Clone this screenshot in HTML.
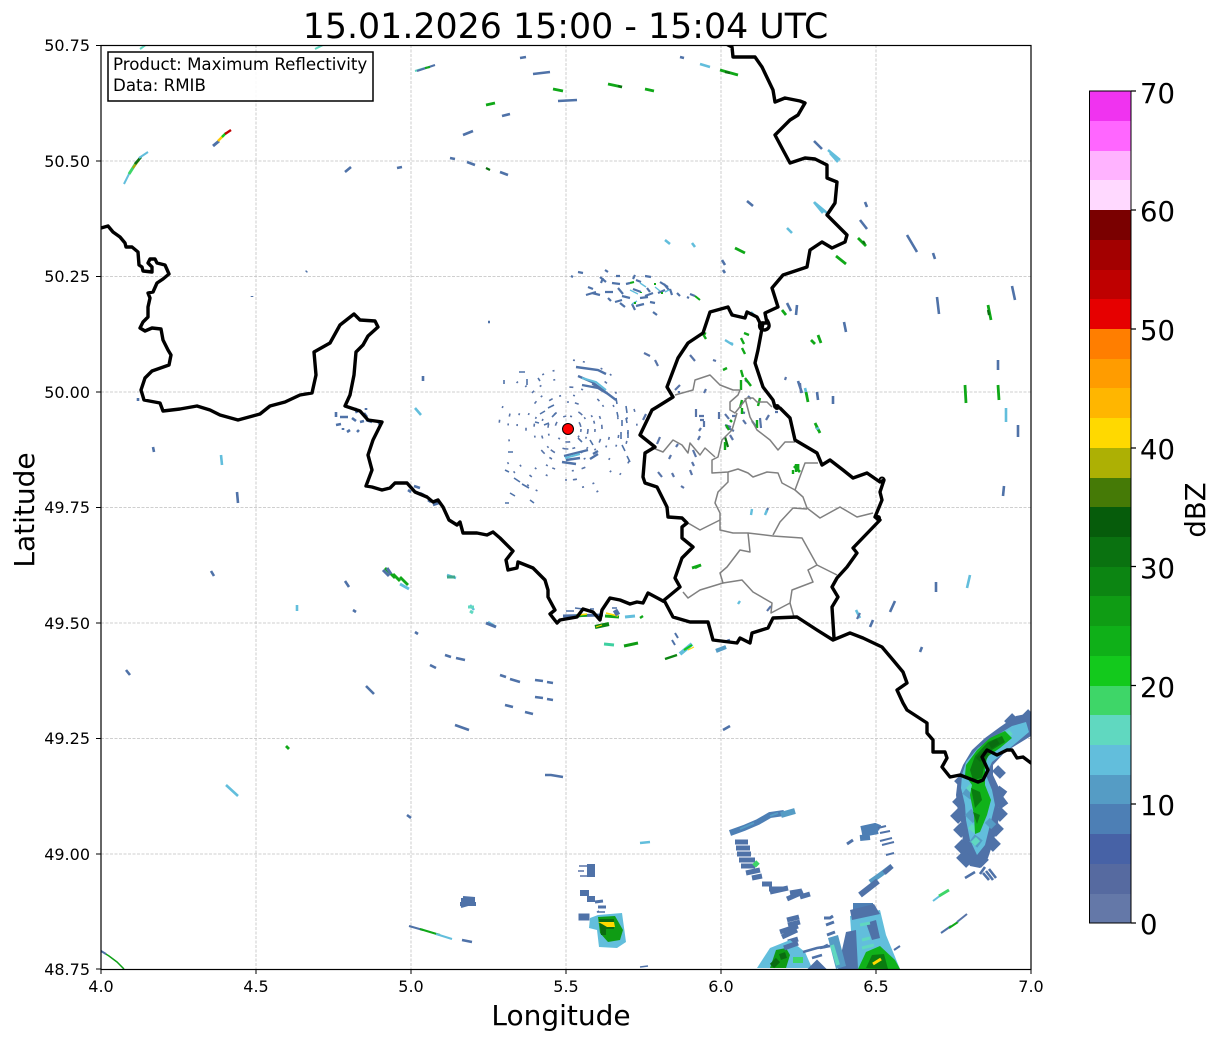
<!DOCTYPE html>
<html><head><meta charset="utf-8"><style>html,body{margin:0;padding:0;background:#fff}svg{display:block}text{font-family:"DejaVu Sans","Liberation Sans",sans-serif;fill:#000}</style></head><body>
<svg width="1219" height="1040" viewBox="0 0 1219 1040" xmlns="http://www.w3.org/2000/svg">
<defs><clipPath id="a"><rect x="101" y="45.5" width="930" height="924"/></clipPath></defs>
<rect width="1219" height="1040" fill="#fff"/>
<text x="565.5" y="38" font-size="34.8" text-anchor="middle">15.01.2026 15:00 - 15:04 UTC</text>
<g stroke="#c0c0c0" stroke-width=".8" stroke-dasharray="3 1.5" fill="none"><path d="M256 45V969M411 45V969M566 45V969M721 45V969M876 45V969M101 161H1031M101 276.5H1031M101 392H1031M101 507.5H1031M101 623H1031M101 738.5H1031M101 854H1031"/></g>
<g clip-path="url(#a)" fill="none" stroke-linecap="butt">
<!-- speckle rings around radar -->
<g stroke="#5874a8" stroke-width="1.6">
<circle cx="568" cy="429" r="13" stroke-dasharray="3 4 2 9 5 6 2 13 4 8"/>
<circle cx="568" cy="429" r="20" stroke-dasharray="5 3 2 14 3 4 6 19 2 6 4 11 3 23"/>
<circle cx="568" cy="429" r="27" stroke-dasharray="2 6 4 17 2 4 3 27 5 3 2 9 3 15 2 31" stroke-dashoffset="9"/>
<circle cx="568" cy="429" r="34" stroke-dasharray="3 5 2 21 4 7 2 12 2 33 3 6 5 14 2 9" stroke-dashoffset="21"/>
<circle cx="568" cy="429" r="42" stroke-dasharray="2 11 3 6 2 29 4 8 2 17 3 5 2 41 3 13" stroke-dashoffset="5"/>
<circle cx="568" cy="429" r="51" stroke-dasharray="2 9 2 24 3 7 2 13 2 38 4 6 2 18 2 11 2 47" stroke-dashoffset="31"/>
<circle cx="568" cy="429" r="60" stroke-dasharray="2 14 2 7 3 31 2 19 2 9 2 53 3 12 2 26" stroke-dashoffset="13"/>
<circle cx="568" cy="429" r="69" stroke-dasharray="2 17 2 9 2 41 3 12 2 27 2 61 2 8" stroke-dashoffset="40"/></g>
<g stroke="#4f72a8" stroke-width="1.6"><path d="M616 398l1 6M617 412l1 5M622 420v6M621 432v7M626 406l1 7M626 418l1 5M628 430v8M622 445l3 6M627 456l3 6M508 452h5M505 470l4 2M514 478l6 4M522 484l7 4M510 493l5 3M530 500l4 3M505 503h4M519 372h6M527 379v6M504 380v4M540 414l5-3M548 408l6-3M552 417l4-4M535 422l4 1M544 425l5-2M578 438l4 4M590 440l3 5M538 378l2 3"/></g>
<!-- arcs above radar -->
<g stroke="#4f72a8" stroke-width="2.4"><path d="M576 367l22 3l8 4M578 376l14 6l16 12l8 6M582 385l16 3l10 6M566 460l14-2M564 456l24-6M562 462l14 2M590 459l8-5M593 454l5-3"/></g>
<g stroke="#62bedc" stroke-width="2"><path d="M582 378l14 4l10 8M565 458l15-4"/></g>
<!-- cluster north of radar -->
<g stroke="#4f72a8" stroke-width="2.2"><path d="M586 295l10-3M588 287l5 2M592 293l8 2M600 277l6 5M603 278l-2 5M605 292h8M612 283l8 1M618 288l5 6M622 296l8 2M615 302l7-2M633 289l8 3M636 280l5 2M645 296l8-3M658 293l7-3M660 282l8 5M664 284l5 6M670 289l2 6M677 293l3 3M690 294l5 2M687 297l2 1M650 302l5 1M636 306l8-2M653 312l4 3M616 276h4M633 279l2-4"/><path d="M640 298l8-1M620 303l5 4M605 270l3 2M645 276l6 1M632 304l3 6M608 298l3 3M626 284l4-1M647 288l3 4M578 272l5 1M571 276l2 1"/></g>
<g stroke="#62bedc" stroke-width="1.4"><path d="M630 290l8 4M640 283l6 4M655 287l5 4M632 304l5-3M665 292l4-2"/></g>
<g stroke="#10a818" stroke-width="2"><path d="M695 296l5 4M630 283l4-1M641 292v1M655 283v2M662 292v2M634 303h2"/></g>
<!-- Dashes: blue -->
<g stroke="#4f72a8" stroke-width="2.6"><path d="M463 135l10-4M520 58l6-1M533 74l17-2M558 101l19-1M502 116l8-2M467 162l8 3M450 158l5 1M345 172l6-5M397 168l5-1M500 172l8 3M680 57l4 1M814 141l8 8M747 201l6 5M865 202l2 5M860 220l7 9M907 235l10 17M933 253l2 6M722 260l3 5M723 270l2 3M787 303l4 8M797 305l-1 10M844 322l2 10M937 297l2 17M1012 286l3 14M798 381l4 12M817 392l1 8M833 396v8M998 360v10M1018 425v12M1004 486l-1 10M936 582v10M895 601l-5 11M873 620l-3 7M922 647l-2 5M237 492l1 11M153 447l1 5M211 571l3 5M345 581l4 6M353 610l3 2M415 632l3 2M126 670l4 5M366 686l8 8M407 815l4 3M462 940l10 2M723 730l7-4M545 775h6l12 2M430 665l6 3M445 655l6 2M456 658l9 2M500 675l6 2M510 679l10 3M535 680l8 1M547 682l6 1M535 697l8 1M547 699l6 1M505 705l8 2M525 712l8 2M455 725l14 5M488 322h2M423 376v5M306 272l1-1M252 297v-1M138 398v3M730 640l-3 1"/><path d="M336 425l5-1M336 412v5M340 417h8M343 428v2M347 432l3-2M352 418l4 3M355 408l2 5M360 422l4-1M357 432l2-2M364 413l3 4M366 420l6 2M378 423l3 1M366 408v2M414 486l6 2M420 493l4 2M428 500l3 2M433 505l6-2M408 490l3 2"/></g>
<g stroke="#62bedc" stroke-width="2.6"><path d="M700 64l10 3M828 150l12 10M814 202l9 11M815 203l12 10M787 228l5 5M665 240l5 4M692 243l3 4M1006 408v14M970 575l-3 13M856 610l4 8M221 455l1 10M297 605v6M470 605l4 5M488 622l8 5M447 575l9 3M415 408l6 7M226 785l12 11M640 843l10-1"/><path d="M805 388l2 8M830 153l8 9M716 650l10-3"/></g>
<!-- Dashes: green -->
<g stroke="#10a818" stroke-width="2.8"><path d="M608 84l14 3M645 89l9 2M553 89l10 2M486 105l9-2M720 70l18 5M735 248l10 5M836 256l10 8M858 238l8 8M818 335l3 8M811 340l4 4M782 310l4 5M988 305l3 15M965 385l1 18M998 385l1 15M286 746l3 3M385 568l10 10M400 577l8 8M692 568l9-3"/><path d="M815 423l5 10M806 392l2 10M794 466l6 6M798 470v-6"/></g>
<g stroke="#0a7010" stroke-width="2.2"><path d="M618 86l4 1M486 168l4 2M725 72l5 1M863 241l2 3M988 310l1 5M725 437l3 10"/></g>
<!-- Lux interior dashes -->
<g stroke="#5874a8" stroke-width="2.2"><path d="M675 390l5-5M679 393v-2M643 420l3-6M644 353l6 3M655 360l3 6M696 409v8M700 420h4M699 416h5M719 412v7M725 414l4 5M732 416h4M725 425l6 2M704 421v6M699 431l2-3M698 440l2-4M657 444l3-7M678 444l-2 3M658 472l4 5M690 470l2 5M692 462l2 4M681 486l3 2M672 473l2 4M693 450l3 7M671 455l-2 4M726 427l8 4M730 435l3 5M745 380l4 3M743 420l3 4M752 421l5 7M760 418l1 10M769 415l-3 5M775 412h3M741 412l4 1M748 396l3 3M768 508l-2 5M704 393l2-4M690 355l5 6M713 360l3 1M785 380l1-3M860 613l-3 6M800 383l1 10M730 312l3 2M771 606l-4 5"/></g>
<g stroke="#10a818" stroke-width="2.4"><path d="M703 334l3 5M745 378l6 8M741 338l3 6M742 348l3 6M723 370l4-2M741 370l2 7M741 380v10M760 398l-2 8M742 408v6M744 333l5 2M742 400l-2 8M726 425l3 5M725 442v8M757 420v8M793 470v4M796 464v8M702 332l4 2M695 568l6-3M640 618l3-2"/><path d="M816 427l3 4M730 420l2 2"/></g>
<g stroke="#62bedc" stroke-width="2.4"><path d="M725 340l8 5M730 343l3 1M751 312l4 4M752 509l-1 6M767 510l-2 5M740 601l-2 3M816 429l3-1"/></g>
<!-- NW streaks -->
<path d="M124 184L130 172" stroke="#62bedc" stroke-width="2"/><path d="M129 174L136 163" stroke="#3ed668" stroke-width="3"/><path d="M133 168L139 160" stroke="#afa804" stroke-width="2"/><path d="M135 164L141 157" stroke="#0c7212" stroke-width="2.6"/><path d="M139 158L148 152" stroke="#62bedc" stroke-width="2"/>
<path d="M213 146L219 141" stroke="#4f72a8" stroke-width="3"/><path d="M218 141L224 135" stroke="#ffc800" stroke-width="2.4"/><path d="M222 137L226 133" stroke="#13c91c" stroke-width="2.4"/><path d="M225 134L231 130" stroke="#bf0000" stroke-width="2.4"/>
<path d="M140 49l7-5M315 49l8-4M415 71l10-3" stroke="#60d8c0" stroke-width="2"/><path d="M417 71l18-6" stroke="#4f72a8" stroke-width="2"/><path d="M425 68l5-1" stroke="#10a818" stroke-width="2"/>
<!-- SW corner -->
<path d="M101 951l8 5l8 6l7 7" stroke="#0fa018" stroke-width="1.5"/><path d="M101 951l5 3" stroke="#4f72a8" stroke-width="2"/>
<path d="M409 926l14 4" stroke="#4f72a8" stroke-width="2"/><path d="M420 929l20 6" stroke="#10a818" stroke-width="2"/><path d="M436 934l16 5" stroke="#62bedc" stroke-width="2"/>
<!-- Mid south streaks -->
<g stroke-width="3"><path d="M383 570l6 6M387 568l4 6" stroke="#4f72a8"/><path d="M393 574l7 7" stroke="#10a818"/><path d="M400 584l9 5" stroke="#62bedc"/><path d="M468 607h6M470 611l3 2" stroke="#60d8c0"/><path d="M486 623l10 4" stroke="#4f72a8"/><path d="M447 577h8" stroke="#3ea88c"/></g>
<g stroke-width="3"><path d="M563 616l40-1" stroke="#4f72a8"/><path d="M576 616l11-1M605 616l14 1" stroke="#10a818"/><path d="M579 615l8-1M606 613l12 3" stroke="#ffd900" stroke-width="1.5"/><path d="M618 615l-3-5" stroke="#4f72a8" stroke-width="5"/><path d="M625 617l10-1" stroke="#62bedc"/><path d="M595 627l14-3" stroke="#0c8512" stroke-width="4"/><path d="M596 627l6-2" stroke="#ffd900" stroke-width="1"/><path d="M604 644l10 1" stroke="#3ed0a0" stroke-width="3"/><path d="M624 646l14-3" stroke="#0f9c14" stroke-width="3"/><path d="M665 659l12-4" stroke="#0c8512" stroke-width="2.5"/><path d="M680 654l12-10" stroke="#62bedc" stroke-width="4"/><path d="M684 650l8-5" stroke="#13c91c" stroke-width="2"/><path d="M688 650l6-3" stroke="#ffd900" stroke-width="1"/><path d="M672 640l3 5M675 633l3 5" stroke="#4f72a8" stroke-width="2"/><path d="M716 651l10-4" stroke="#559cc5" stroke-width="4"/><path d="M566 611h8M575 608l8 1M590 609h4M612 608h5" stroke="#4f72a8" stroke-width="1.5"/></g>
<!-- SE band: base shapes + diamond blocks -->
<path d="M1031 713L1016 716L1000 727L985 738L972 750L963 765L958 778L956 795L958 812L963 828L962 850L970 866L980 868L988 858L993 843L998 825L999 805L1000 790L993 775L993 765L1005 752L1031 736Z" fill="#4f72a8"/>
<g stroke="#4f72a8" stroke-width="11"><path d="M1018 733l9-9M1023 722l9-9M1008 725l8-8M958 785l8-8M956 798l8 8M954 812l8 8M957 826l8 8M958 843l8 8M960 854l10 10M977 864l8-8M989 848l8-8M992 833l8-8M996 818l8-8M997 805l8-6M996 790l8 6M996 775l6-6"/></g>
<path d="M1026 722L1012 726L994 737L978 748L966 762L962 775L961 788L965 805L966 820L970 840L977 855L985 845L990 825L995 805L992 790L986 775L992 762L1010 748L1029 732Z" fill="#62bedc"/>
<g stroke="#559cc5" stroke-width="9"><path d="M965 790l8 6M968 812l8 8M972 838l8 6M988 826l5-5"/></g>
<g stroke="#60d8c0" stroke-width="6"><path d="M968 786l6 6M970 826l6 5M973 844l5 -5M1003 738l8-6"/></g>
<path d="M1005 731L990 738L977 750L966 765L965 775L972 785L970 795L974 815L975 834L980 832L987 815L991 800L985 785L985 770L987 757L1000 748L1012 738Z" fill="#10b21a"/>
<path d="M1002 736L988 742L975 756L970 770L973 780L982 778L985 762L992 750L1005 742ZM971 788L980 792L982 800L975 808ZM973 812L980 815L977 824Z" fill="#0a7c10"/>
<path d="M978 760l8-8M990 746l8-5" stroke="#0a6c10" stroke-width="6"/>
<g stroke="#4f72a8" stroke-width="2.6"><path d="M965 878l10-6M980 874l5-7M986 871l7 9M989 869l7 9M983 873l6 7M956 803l5-7"/></g>
<!-- small SE streaks -->
<path d="M933 901l8-6" stroke="#62bedc" stroke-width="2"/><path d="M939 896l10-6" stroke="#3ed668" stroke-width="3"/><path d="M941 933l10-7" stroke="#4f72a8" stroke-width="2"/><path d="M949 928l9-6" stroke="#10a818" stroke-width="2"/><path d="M957 922l10-8" stroke="#5874a8" stroke-width="2"/>
<!-- South arc -->
<path d="M730 833l14-5l14-6l12-7l14-2" stroke="#4d7fb5" stroke-width="6"/><path d="M740 829l14-6M770 816l8-3" stroke="#559cc5" stroke-width="2"/><path d="M781 815l14-4" stroke="#559cc5" stroke-width="6"/>
<g stroke="#4f72a8" stroke-width="5"><path d="M735 842h13M736 848h14M737 854h14M739 860h16M741 866h14"/><path d="M746 873l14-3M752 878l10-2M762 884h10M769 889h14M770 892l18-4M790 893l12-2M787 899l16-7M800 897l10-3M787 920l12-3M788 925l12-3M780 932l18-6M782 937l15-7M788 942l10-3"/></g>
<path d="M754 866l4-4" stroke="#3ed668" stroke-width="5"/><path d="M861 829l14-3l5 2M862 834l16-3M860 838l10-1" stroke="#4d7fb5" stroke-width="6"/><path d="M878 828l8-2M880 833l10-2M880 841l12-3M882 845l12-3M886 855l8-2" stroke="#4f72a8" stroke-width="2"/><path d="M847 844l6-4" stroke="#4f72a8" stroke-width="3"/>
<path d="M870 882l10-7l12-9" stroke="#559cc5" stroke-width="5"/><path d="M884 873l8-7" stroke="#4f72a8" stroke-width="5"/><path d="M860 895l18-14" stroke="#4f72a8" stroke-width="6"/><path d="M853 907h20" stroke="#4d7fb5" stroke-width="8"/><path d="M833 916l-3 2h-6M834 922l-8 3M835 932l-8 3M828 945l-4 2" stroke="#4f72a8" stroke-width="3"/>
<path d="M850 916L880 910L886 935L900 969L846 969L852 945Z" fill="#62bedc"/>
<path d="M850 910L874 904L880 914L852 920ZM866 923L876 920L880 938L872 940ZM846 932L856 930L858 969L838 969L842 950Z" fill="#4f72a8"/>
<path d="M860 925l10-2M862 940l8-2M862 948l12-3" stroke="#60d8c0" stroke-width="3"/>
<path d="M858 969L866 952L880 946L895 960L900 969Z" fill="#10b21a"/>
<path d="M866 968L872 955L884 954L888 969Z" fill="#0a7c10"/>
<path d="M873 964l8-5" stroke="#ffd900" stroke-width="3"/>
<path d="M894 950l6-4" stroke="#4f72a8" stroke-width="2"/>
<path d="M828 938L838 935L846 966L836 969Z" fill="#559cc5"/>
<path d="M832 945L838 965" stroke="#60d8c0" stroke-width="4"/>
<!-- Bottom-left blob of arc -->
<path d="M757 968L770 948L790 940L805 952L812 968Z" fill="#62bedc"/><path d="M770 968L776 950L786 948L790 955L786 968Z" fill="#0f9c14"/><path d="M772 966l6-6M780 957l6-2" stroke="#0a6c10" stroke-width="6"/><path d="M784 948l14-5" stroke="#4f72a8" stroke-width="5"/><path d="M793 960h10" stroke="#3ed668" stroke-width="6"/><path d="M812 968l5-5l5 5Z" stroke="#4f72a8" stroke-width="5" fill="#4f72a8"/><path d="M803 952l14-4l12-2M812 958l10-3M820 948l10-2" stroke="#4f72a8" stroke-width="2.5"/>
<!-- Vertical blob at 5.6 -->
<path d="M579 866h9M578 871h6M580 876h8" stroke="#5874a8" stroke-width="1.5"/><path d="M587 864h8v13h-8Z" fill="#4f72a8"/>
<path d="M580 890h9v6h6v6h-8v-6h-7Z" fill="#4f72a8"/><path d="M580 915h8v4h-8ZM595 902l8-1M598 907h8" fill="#4f72a8" stroke="#4f72a8" stroke-width="3"/><path d="M599 911l-2 1h8" stroke="#4f72a8" stroke-width="1.5"/>
<path d="M598 915L622 913L626 942L617 948L599 947L597 930L589 928L590 918Z" fill="#62bedc"/>
<path d="M598 917L615 916L623 930L620 940L608 942L600 933Z" fill="#0f9c14"/><path d="M599 919h15v10h-8v6h-5Z" fill="#0a6c10"/><path d="M598 922h16l1 5h-8l-5-3" fill="#ffd900"/>
<path d="M640 967l8-1" stroke="#4f72a8" stroke-width="1.5"/>
<path d="M460 904h16M461 900h14" stroke="#4f72a8" stroke-width="4"/><path d="M461 907l14-4M463 897l12 1" stroke="#4f72a8" stroke-width="2"/>
<!-- County borders -->
<g stroke="#808080" stroke-width="1.5" stroke-linejoin="round"><path d="M675 395L693 390L695 380L710 375L720 385L733 390L740 390L738 395L730 402L730 410L735 413L747 398L753 398L757 402L767 402L772 407"/><path d="M745 398L750 417L757 430L770 440L778 450L785 442L795 442"/><path d="M737 413L732 430L722 440L718 457L712 460L712 473L728 472L738 469L748 473L753 477L767 472L778 473L782 483L795 490L805 463L818 463"/><path d="M653 448L663 452L673 440L682 445L688 453L690 443L700 455L705 448L715 457"/><path d="M728 472L728 482L718 492L715 503L720 513L720 530L733 533L748 533L773 536L802 538L817 565L837 575"/><path d="M795 490L803 497L807 508L820 518L840 507L857 517L873 513"/><path d="M807 509L793 508L780 522L773 535"/><path d="M720 520L700 530L688 523"/><path d="M748 533L750 552L740 550L727 567L720 573L723 583L700 590L688 598L683 592"/><path d="M723 583L742 580L753 592L772 603L771 613L790 603L792 590L813 582L808 570L817 565"/><path d="M790 603L794 617"/></g>
<!-- Black borders -->
<g stroke="#000" stroke-width="3.4" stroke-linejoin="round" stroke-linecap="round"><path d="M101 228L108 226L113 232L120 237L125 243L126 247L132 247L138 252L139 265L142 267L143 271L152 272L152 267L148 263L150 259L155 259L157 263L165 265L169 274L163 279L157 283L153 292L148 293L150 298L148 307L148 317L143 322L140 328L145 331L152 328L161 329L163 340L168 350L171 355L169 365L152 371L145 378L141 390L144 400L160 403L163 411L180 409L197 406L210 410L220 415L238 420L260 414L270 406L285 402L300 395L312 393L316 375L314 352L330 343L340 325L354 314L360 320L375 321L378 327L368 336L363 345L356 352L354 375L350 395L345 406L360 411L368 420L382 422L373 440L368 455L372 470L366 486L372 487L382 490L390 488L395 483L407 483L415 492L427 497L433 502L438 500L443 507L449 520L457 525L460 522L463 533L477 533L487 535L493 532L500 538L513 551L506 560L508 570L517 568L518 562L533 568L545 580L548 590L548 597L555 610L550 614L557 623L560 620L577 617L583 609L593 612L600 620L602 610L610 598L620 600L630 604L637 602L643 603L648 593L663 601L665 602L673 617L690 622L708 622L713 640L737 643L740 638L750 643L752 633L768 628L773 618L797 617L817 630L833 640L850 633L863 638L882 647L893 660L903 672L907 683L897 690L903 703L907 710L927 723L927 733L933 740L933 752L945 752L947 758L942 767L950 777L960 775L978 782L983 780L988 770L982 757L987 750L997 755L1007 750L1012 750L1017 758L1023 757L1031 763"/><path d="M663 601L680 587L675 578L682 558L693 547L682 538L682 527L687 523L682 518L668 517L667 507L657 487L645 483L643 477L645 453L655 447L640 435L652 410L657 407L673 397L667 387L678 358L688 343L703 333L710 312L728 307L732 315L745 318L747 312L757 317L760 323L767 323L765 313L778 307L772 288L783 275L807 267L810 250L822 242L832 248L845 242L847 235L827 215L835 203L837 182L827 178L827 165L815 159L805 158L790 163L783 150L775 135L790 120L798 115L805 103L800 101L785 98L775 102L773 90L762 67L755 57L733 57L732 47L728 45"/><path d="M760 323Q758 330 765 330Q772 328 767 320"/><path d="M763 323L758 350L755 363L763 387L773 400L775 407L780 408L790 418L795 440L817 453L822 465L830 460L843 470L853 478L867 473L880 482L884 480L880 492L882 500L875 517L880 520L853 548L857 553L847 567L837 578L832 587L838 597L832 607L834 638"/></g>
<circle cx="882" cy="480" r="2.5" stroke="#000" stroke-width="2"/>
<circle cx="777" cy="407" r="3" fill="#000"/><circle cx="878" cy="518" r="3" fill="#000"/>
<!-- Radar site -->
<circle cx="568" cy="429" r="5.5" fill="#f00" stroke="#000" stroke-width="1"/>
</g>
<!-- Axes frame -->
<rect x="101" y="45.5" width="930" height="924" fill="none" stroke="#000" stroke-width="1.2"/>
<path d="M101 969v5M256 969v5M411 969v5M566 969v5M721 969v5M876 969v5M1031 969v5M101 45.5h-5M101 161h-5M101 276.5h-5M101 392h-5M101 507.5h-5M101 623h-5M101 738.5h-5M101 854h-5M101 969h-5" stroke="#000" stroke-width="1" fill="none"/>
<g font-size="16" text-anchor="end"><text x="90" y="51">50.75</text><text x="90" y="167">50.50</text><text x="90" y="282">50.25</text><text x="90" y="398">50.00</text><text x="90" y="513">49.75</text><text x="90" y="629">49.50</text><text x="90" y="744">49.25</text><text x="90" y="860">49.00</text><text x="90" y="975">48.75</text></g>
<g font-size="16" text-anchor="middle"><text x="101" y="992">4.0</text><text x="256" y="992">4.5</text><text x="411" y="992">5.0</text><text x="566" y="992">5.5</text><text x="721" y="992">6.0</text><text x="876" y="992">6.5</text><text x="1031" y="992">7.0</text></g>
<text x="561" y="1025" font-size="28" text-anchor="middle">Longitude</text>
<text transform="translate(34 510) rotate(-90)" font-size="28" text-anchor="middle">Latitude</text>
<!-- Legend -->
<rect x="108" y="52" width="265" height="49" fill="#fff" fill-opacity=".9" stroke="#000" stroke-width="1.5"/>
<text x="113" y="70" font-size="16.65">Product: Maximum Reflectivity</text><text x="113" y="91" font-size="16.65">Data: RMIB</text>
<!-- Colorbar -->
<g shape-rendering="crispEdges"><rect x="1090" y="893" width="41" height="30" fill="#6478a8"/><rect x="1090" y="864" width="41" height="30" fill="#566aa0"/><rect x="1090" y="834" width="41" height="30" fill="#4762a6"/><rect x="1090" y="804" width="41" height="30" fill="#4d7fb5"/><rect x="1090" y="774" width="41" height="30" fill="#559cc5"/><rect x="1090" y="745" width="41" height="30" fill="#62bedc"/><rect x="1090" y="715" width="41" height="30" fill="#60d8c0"/><rect x="1090" y="685" width="41" height="30" fill="#3ed668"/><rect x="1090" y="656" width="41" height="30" fill="#13c91c"/><rect x="1090" y="626" width="41" height="30" fill="#0fb018"/><rect x="1090" y="596" width="41" height="30" fill="#0f9c14"/><rect x="1090" y="566" width="41" height="30" fill="#0c8512"/><rect x="1090" y="537" width="41" height="30" fill="#0a7210"/><rect x="1090" y="507" width="41" height="30" fill="#065c0b"/><rect x="1090" y="477" width="41" height="30" fill="#457a06"/><rect x="1090" y="448" width="41" height="30" fill="#adb004"/><rect x="1090" y="418" width="41" height="30" fill="#ffd900"/><rect x="1090" y="388" width="41" height="30" fill="#ffb600"/><rect x="1090" y="358" width="41" height="30" fill="#ff9c00"/><rect x="1090" y="329" width="41" height="30" fill="#ff7e00"/><rect x="1090" y="299" width="41" height="30" fill="#e60000"/><rect x="1090" y="269" width="41" height="30" fill="#bf0000"/><rect x="1090" y="240" width="41" height="30" fill="#a30000"/><rect x="1090" y="210" width="41" height="30" fill="#7a0000"/><rect x="1090" y="180" width="41" height="30" fill="#ffd9ff"/><rect x="1090" y="150" width="41" height="30" fill="#ffb3ff"/><rect x="1090" y="121" width="41" height="30" fill="#ff66ff"/><rect x="1090" y="91" width="41" height="30" fill="#f033f0"/></g>
<rect x="1089.5" y="91" width="41.5" height="832" fill="none" stroke="#000" stroke-width="1"/>
<path d="M1131 923h5M1131 804h5M1131 685.5h5M1131 566.5h5M1131 448h5M1131 329h5M1131 210h5M1131 91h5" stroke="#000" stroke-width="1.2" fill="none"/>
<g font-size="27.5"><text x="1140" y="934">0</text><text x="1140" y="815">10</text><text x="1140" y="697">20</text><text x="1140" y="578">30</text><text x="1140" y="459">40</text><text x="1140" y="340">50</text><text x="1140" y="221">60</text><text x="1140" y="103">70</text></g>
<text transform="translate(1205 510) rotate(-90)" font-size="27.5" text-anchor="middle">dBZ</text>
</svg>
</body></html>
